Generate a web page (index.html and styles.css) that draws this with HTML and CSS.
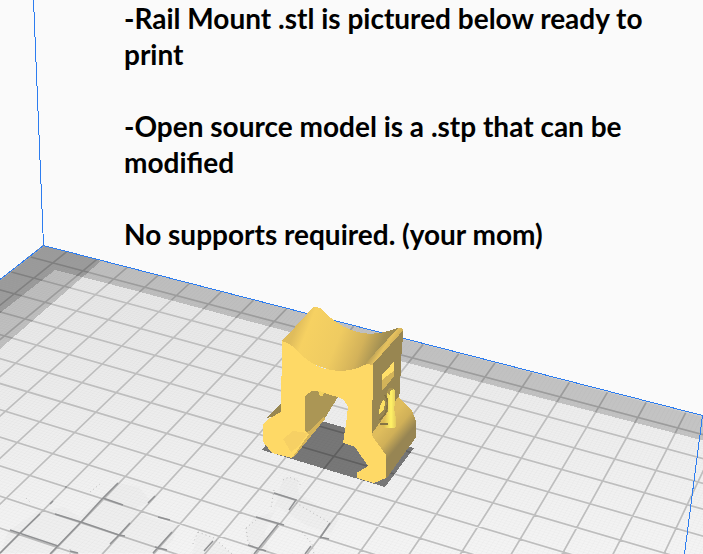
FILE: index.html
```html
<!DOCTYPE html>
<html lang="en">
<head>
<meta charset="utf-8">
<meta name="viewport" content="width=device-width, initial-scale=1">
<title>Rail Mount</title>
<link rel="stylesheet" href="styles.css">
</head>
<body>
<main class="stage">
  <svg class="scene" viewBox="0 0 703 554" preserveAspectRatio="xMinYMin slice" aria-hidden="true">
    <defs>
      <linearGradient id="plate" x1="0" y1="245" x2="0" y2="554" gradientUnits="userSpaceOnUse">
        <stop offset="0" stop-color="#e5e5e5"/>
        <stop offset="1" stop-color="#f4f4f4"/>
      </linearGradient>
      <linearGradient id="saddle" x1="298" y1="322" x2="388" y2="358" gradientUnits="userSpaceOnUse">
        <stop offset="0" stop-color="#dfbc5c"/>
        <stop offset=".12" stop-color="#f6d162"/>
        <stop offset=".45" stop-color="#efcb61"/>
        <stop offset=".7" stop-color="#d3b25a"/>
        <stop offset=".88" stop-color="#a39053"/>
        <stop offset="1" stop-color="#9b8950"/>
      </linearGradient>
      <linearGradient id="rim" x1="378" y1="344" x2="390" y2="352" gradientUnits="userSpaceOnUse">
        <stop offset="0" stop-color="#b39a53"/>
        <stop offset=".5" stop-color="#e6c25f"/>
        <stop offset="1" stop-color="#cdac56"/>
      </linearGradient>
      <linearGradient id="slope" x1="385" y1="425" x2="403" y2="440" gradientUnits="userSpaceOnUse">
        <stop offset="0" stop-color="#dfbd5d"/>
        <stop offset=".5" stop-color="#d0b058"/>
        <stop offset="1" stop-color="#978553"/>
      </linearGradient>
      <linearGradient id="bore" x1="384" y1="0" x2="398" y2="0" gradientUnits="userSpaceOnUse">
        <stop offset="0" stop-color="#dcbc56"/>
        <stop offset=".5" stop-color="#fff266"/>
        <stop offset="1" stop-color="#d9ba58"/>
      </linearGradient>
    </defs>

    <polygon id="bed" class="bed"/>
    <path id="minor" class="minor"/>
    <path id="major" class="major"/>

    <!-- disallowed margins of the build plate -->
    <polygon class="margin" points="43,245 720,420 720,445 233,317 133,290 55,270"/>
    <polygon class="margin" points="43,245 101,261 0,349 0,279"/>
    <polygon class="margin" points="0,279 43,245 55,270 0,313"/>

    <!-- smudged plate texture -->
    <g class="smudge">
      <path d="M103 497l16-14 20 4 12 14-16 8 14 8 28 8-4 16-16 12H0l8-22 30-20 26-4 16 10z"/>
      <path d="M283 478h14l2 16 40 24-8 16-24-8-30-20-12 26 4 22h-18l-6-22 8-14 20-6z"/>
      <path d="M198 532l16 6 18 16h-40z"/>
    </g>
    <path class="dots" d="M90 492l10-8M198 532l-6 14M198 532l16 6 18 16M283 480l6-3 8 3 4 6M274 490l-3 18M246 528l10-8M246 528l2 14 10 8M302 532l10 12 2 10M296 503l34 20M70 554v-8M26 498l4 4"/>
    <path class="scratch" d="M118 483L103 498L81 522L50 554M103 498l20 7M55 514l26 8 38 13 6 1M10 530l48 16M40 514L19 534L0 553M155 496l-7 7M130 523l-11 12-9 9M65 487l2 0M53 501l-3 3M158 517l12 3M172 532L153 553M155 547l12 3M70 551l8 2M213 541l-9 10M274 493l22 7-7 10M256 517l28 8M279 523l-25 31M248 545l18 6M330 523l-10 15M320 537l9 2M311 546l-6 8"/>

    <path class="volume" d="M33.500 0L43.500 245.500L0 279.500M43.500 245.500L702.500 415.500L684.500 554"/>

    <!-- rail mount -->
    <polygon class="shadow" points="262,450 291,412 414,448 385,487"/>
    <g class="part">
      <path fill="#988751" d="M281 403L266 418L282 415z"/>
      <path fill="url(#saddle)" d="M282 341L314 306.500L320 308Q325 312 331 318Q343 328 357 332Q372 336 388 331L398 328L374 366L340 373L300 360z"/>
      <path fill="url(#rim)" d="M398 328Q402 327 403.500 330L374 366L364 365z"/>
      <path fill="#988651" d="M403.500 330L401 360L400 392L397 402L371.500 435L373 364z"/>
      <path fill="url(#slope)" d="M371 435L398 397L412 411L415.500 420V438L386 479V455z"/>
      <path fill="#ffdf69" d="M382 375L393.500 362V377L382 391z"/>
      <path fill="#d3b359" d="M382 380L393.500 371V377L382 391z"/>
      <path fill="url(#bore)" d="M387 393Q388 388 391 387.500Q395 388 395 393V403L394 409L396 418V427Q391 430 382 427Q378 424 383 421Q388 416 388 406z"/>
      <path fill="#a8924f" d="M387 393Q388 388 391 387.500L394 389Q389 390 390 395z"/>
      <path fill="none" stroke="#857444" stroke-width="1.500" d="M385 395Q390 402 385 414L380 420M380 424L388 424"/>
      <path fill="#fbe063" d="M384 399Q386 404 383 411L379.500 414Q378.500 406 384 399z"/>
      <path fill="#ab9655" d="M305 396L312 391L320 390L338 397L325 418L309 434L305 431z"/>
      <path fill="#d5b45a" d="M309 431L324 416L325 419L293 458L288 450z"/>
      <path fill="#fed966" d="M282 341Q290 343 298 351Q309 364 324 368.500Q340 373 355 369L367 364L373.500 365L371.500 435L386 455V478L374 483L357 478L356.500 473L368 466L355 447L343 443L346 424L348 407L344 400L338 397L330 395L320 391L312 391L305 396L305.500 431L309 434L292 458L272 453L262.500 441V425L270 418L281 412z"/>
      <path fill="#f6d064" d="M283 439L293 431L308 433L299 446L291 452z"/>
      <path fill="#f3d260" d="M318 391l6 1-1 4h-3z"/>
    </g>
  </svg>

  <section class="notes">
    <p>-Rail Mount .stl is pictured below ready to print</p>
    <p>-Open source model is a .stp that can be modified</p>
    <p>No supports required. (your mom)</p>
  </section>
</main>
<script src="grid.js"></script>
</body>
</html>
```
FILE: styles.css
```css
body {
  margin: 0;
  background: #fafafa;
  color: #000;
  font-family: Lato, "Open Sans", sans-serif;
}

.stage {
  position: relative;
  min-height: 100vh;
  overflow: hidden;
}

.scene {
  position: absolute;
  inset: 0;
  width: 100%;
  height: 100%;
}

.notes {
  position: relative;
  max-width: 540px;
  padding-left: 124px;
  font-size: 28px;
  font-weight: 700;
  line-height: 36px;
}

.notes p {
  margin: 0 0 36px;
}

.bed { fill: url(#plate); }
.minor { fill: none; stroke: #000; stroke-opacity: .02; }
.major { fill: none; stroke: #bebebe; stroke-width: 1.7; }
.margin { fill: #000; fill-opacity: .175; shape-rendering: crispEdges; }
.smudge { fill: #000; fill-opacity: .015; }
.dots { fill: none; stroke: #999; stroke-opacity: .6; stroke-dasharray: 1 3; }
.scratch { fill: none; stroke: #909193; stroke-width: 1.5; }
.volume { fill: none; stroke: #2d7df0; stroke-width: 1; shape-rendering: crispEdges; }
.shadow { fill: #000; fill-opacity: .5; shape-rendering: crispEdges; }
.part { shape-rendering: crispEdges; }
```
FILE: grid.js
```js
// Perspective projection of build plate cell (i, j) to scene coordinates.
function project(i, j) {
  const w = 0.98838 - 0.00757 * i - 0.01535 * j;
  const x = (52.3 + 29.18 * i - 19.33 * j) / w;
  const y = (259.8 + 5.83 * i + 10.815 * j) / w;
  return x.toFixed(1) + " " + y.toFixed(1);
}

const bounds = { left: -0.75, right: 23, back: -0.757, front: 15 };

function gridPath(step) {
  let d = "";
  for (let n = 0; n * step <= bounds.right; n++) {
    const i = n * step;
    d += "M" + project(i, bounds.back) + "L" + project(i, bounds.front);
  }
  for (let n = 0; n * step <= bounds.front; n++) {
    const j = n * step;
    d += "M" + project(bounds.left, j) + "L" + project(bounds.right, j);
  }
  return d;
}

document.getElementById("bed").setAttribute("points", [
  project(bounds.left, bounds.back),
  project(bounds.right, bounds.back),
  project(bounds.right, bounds.front),
  project(bounds.left, bounds.front)
].join(" "));
document.getElementById("major").setAttribute("d", gridPath(1));
document.getElementById("minor").setAttribute("d", gridPath(0.1));
```
